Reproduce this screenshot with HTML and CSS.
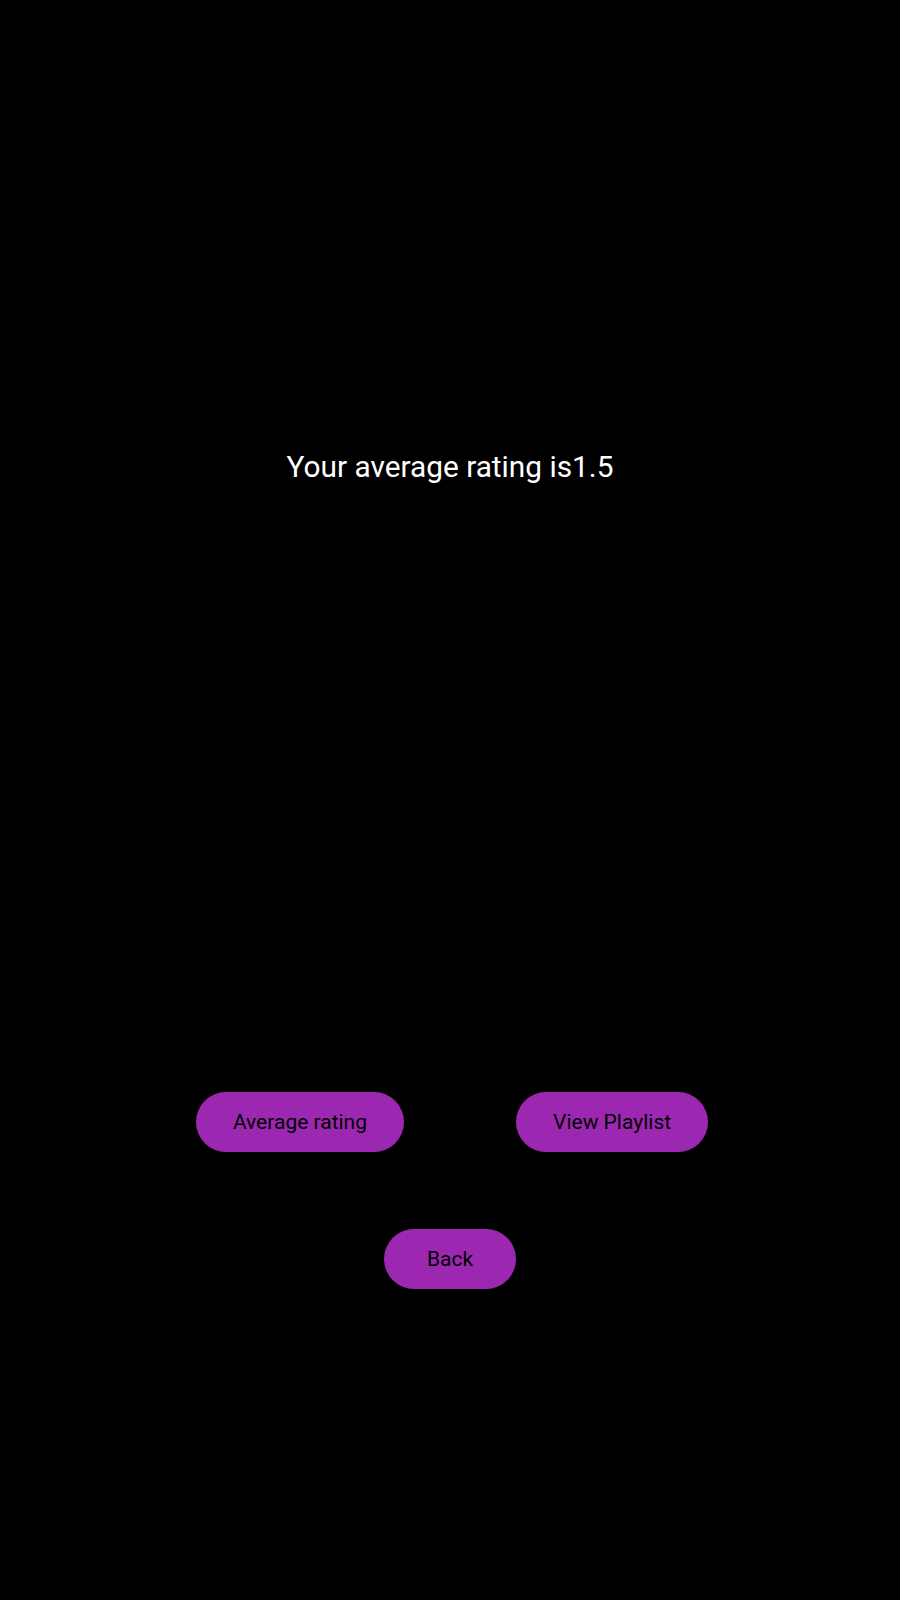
FILE: index.html
```html
<!DOCTYPE html>
<html>
<head>
<meta charset="utf-8">
<link rel="stylesheet" href="styles.css">
</head>
<body>
<main class="screen">
  <h1 class="result">Your average rating is1.5</h1>
  <div class="row">
    <button class="btn">Average rating</button>
    <button class="btn">View Playlist</button>
  </div>
  <div class="row back-row">
    <button class="btn back">Back</button>
  </div>
</main>
</body>
</html>
```
FILE: styles.css
```css
html, body {
  margin: 0;
  padding: 0;
  background: #000;
}
.screen {
  width: 900px;
  height: 1600px;
  display: flex;
  flex-direction: column;
  align-items: center;
  font-family: Roboto, "Liberation Sans", sans-serif;
}
.result {
  margin: 449px 0 0;
  font-size: 29.8px;
  line-height: 36px;
  font-weight: 400;
  color: #fff;
}
.row {
  display: flex;
  justify-content: center;
  gap: 112px;
  padding-left: 4px;
  margin-top: 607px;
}
.btn {
  height: 60px;
  padding: 0 37px;
  border: none;
  border-radius: 30px;
  background: #9c27b0;
  color: #000;
  font-family: Roboto, "Liberation Sans", sans-serif;
  font-size: 21px;
  font-weight: 400;
}
.back-row {
  margin-top: 77px;
  padding-left: 0;
}
.back {
  min-width: 132px;
}
```
